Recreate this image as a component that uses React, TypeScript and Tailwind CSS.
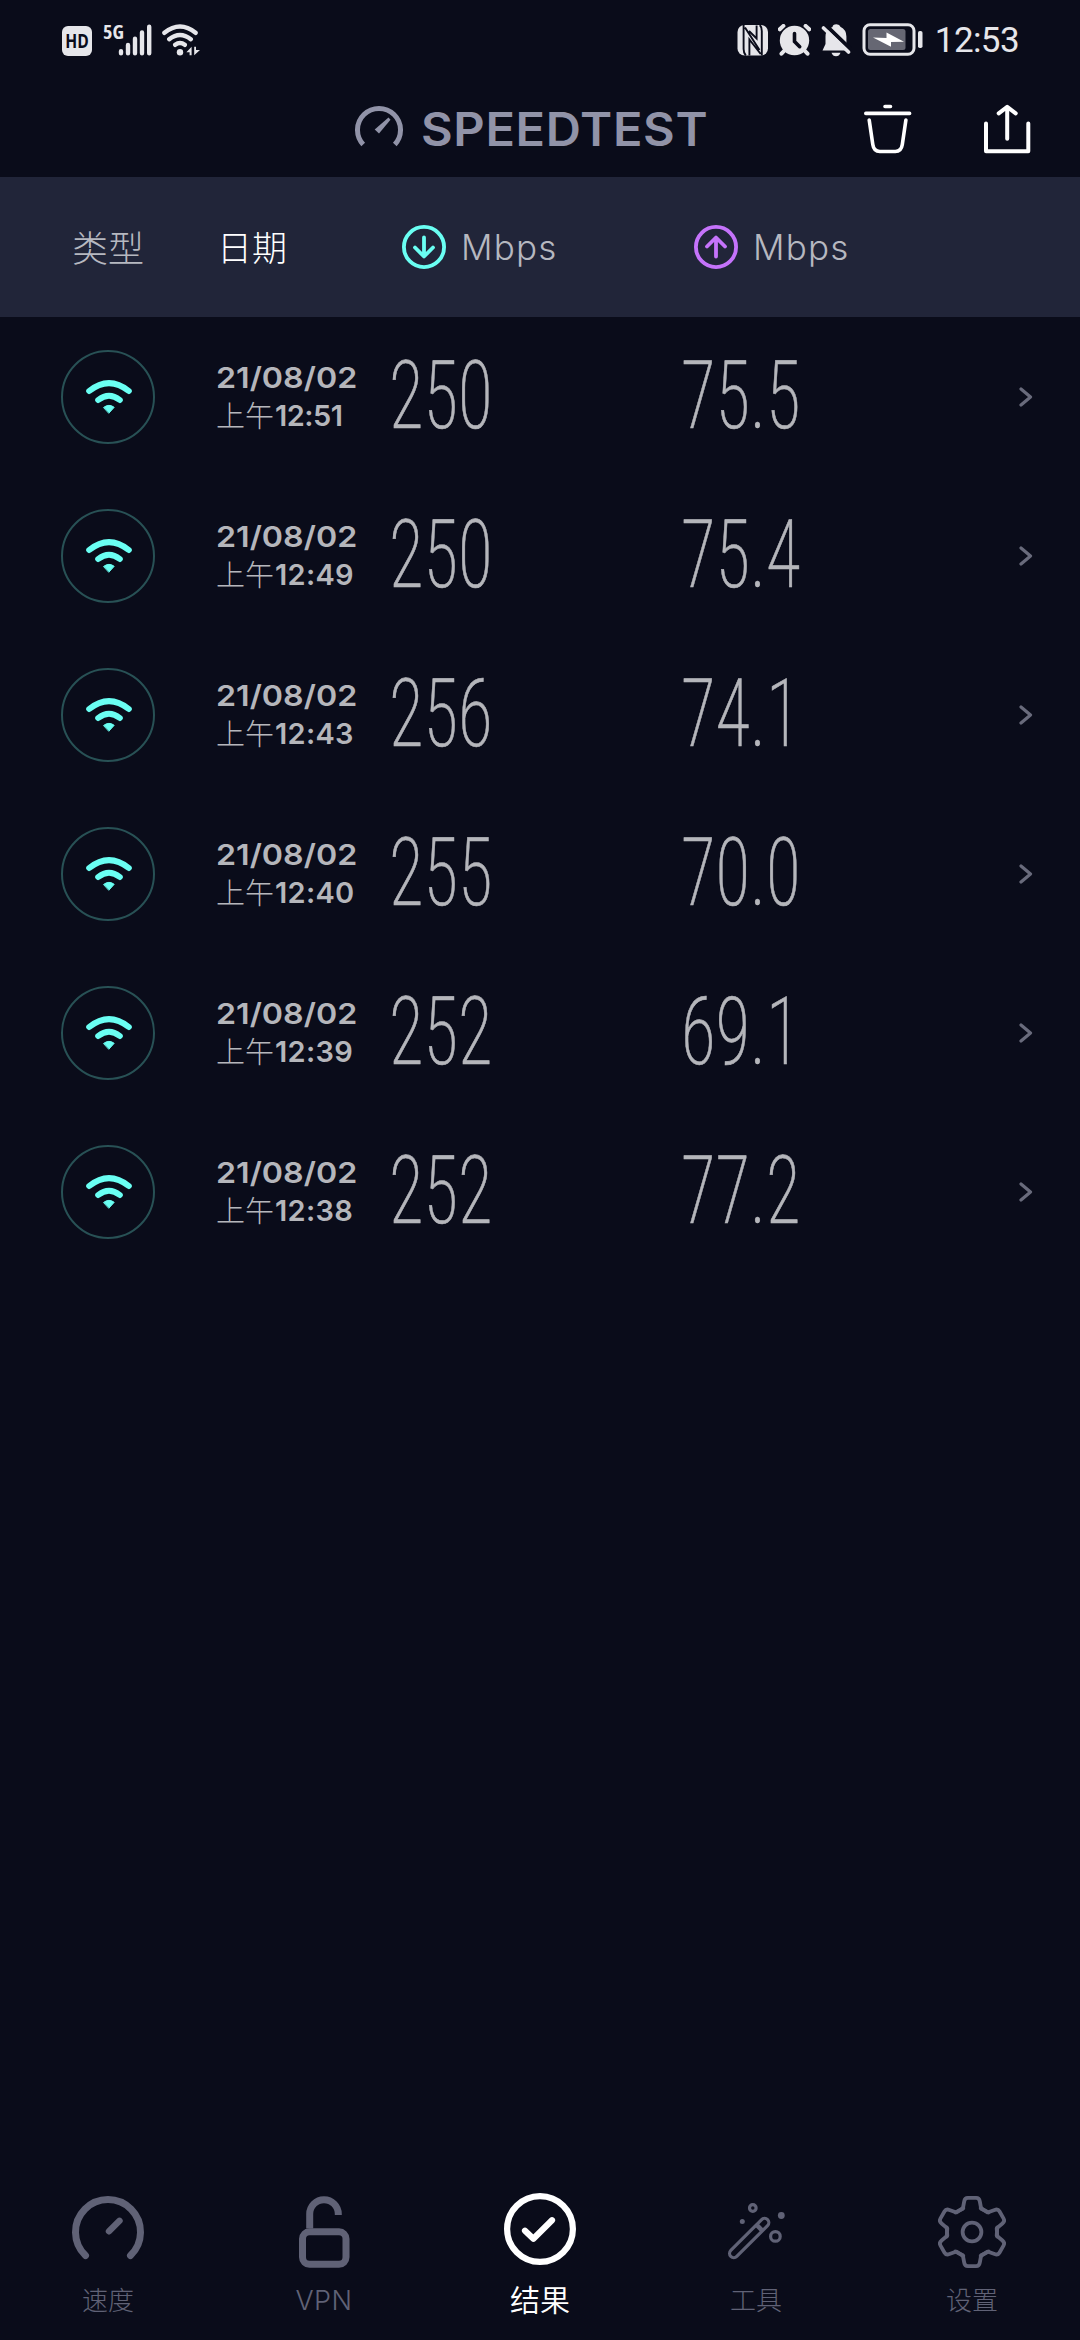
const results = [
   { date: '21/08/02', time: '12:51', down: '250', up: '75.5' },
   { date: '21/08/02', time: '12:49', down: '250', up: '75.4' },
   { date: '21/08/02', time: '12:43', down: '256', up: '74.1' },
   { date: '21/08/02', time: '12:40', down: '255', up: '70.0' },
   { date: '21/08/02', time: '12:39', down: '252', up: '69.1' },
   { date: '21/08/02', time: '12:38', down: '252', up: '77.2' },
];

function SignalIcons() {
   return (
      <div className="flex h-8 items-start text-[#e6e6ea]">
         <div className="mt-[2px] flex h-[30px] w-[30px] items-center justify-center rounded-[6px] bg-[#e6e6ea] font-['Open_Sans',sans-serif] text-[20px] font-bold text-[#0a0c1a]">
            <span className="scale-x-[0.78]">HD</span>
         </div>
         <span className="ml-[11px] w-4 font-['Open_Sans',sans-serif] text-[20px] leading-[15px] font-bold font-stretch-75%">
            5G
         </span>
         <svg width="31" height="32" viewBox="120 24 31 32" className="overflow-visible" stroke="currentColor" strokeWidth="4.4" strokeLinecap="round">
            <path d="M122 51.2v2M129 45v8.2M136 38.7v14.5M143 32.4v20.8M150.2 26.7v26.5" />
         </svg>
         <svg width="39" height="32" viewBox="162 24 39 32" className="ml-3" fill="none" stroke="currentColor" strokeWidth="4.4" strokeLinecap="round">
            <path d="M164.4 32.8Q180 20.4 195.6 32.8M169.2 39.2Q180 30.6 190.8 39.2M175.2 44.8Q180 41 184.8 44.8" />
            <circle cx="180" cy="52.3" r="3.2" fill="currentColor" stroke="none" />
            <path d="M191.6 46.8v8.4h-2v-3h-3.2zM194.2 55.2v-8.4h1.8v3.2h4z" fill="currentColor" stroke="none" />
         </svg>
      </div>
   );
}

function StatusIcons() {
   return (
      <div className="flex items-center gap-[10px] text-[#e6e6ea]">
         <svg width="31" height="32" viewBox="735 24 31 32">
            <rect x="735.5" y="25" width="30.5" height="30.5" rx="7" fill="currentColor" />
            <path
               d="M741.6 25v24q0 4 2.2 6.5M743 27.5l14.5 22.5M747.4 55.5V39.5l11.3 14.5M759.8 55.5V31q0-4-2-6M754.6 25.5V38.5L747 31"
               fill="none"
               stroke="#0a0c1a"
               strokeWidth="1.9"
            />
         </svg>
         <svg width="33" height="32" viewBox="776.5 24.5 33 32" fill="none" strokeLinecap="round">
            <circle cx="793" cy="41" r="14.7" fill="currentColor" />
            <path d="M783 51l-3 3.2M803 51l3 3.2M778.3 29.8l3.6-3.4M807.7 29.8l-3.6-3.4" stroke="currentColor" strokeWidth="4" />
            <path d="M793 34v8l5.2 5.2" stroke="#0a0c1a" strokeWidth="3.6" />
         </svg>
         <svg width="31" height="33" viewBox="820 24 31 33" strokeLinecap="round">
            <path d="M831.5 27q0-2.5 4-2.8 3.3.3 3.9 2.6 6 3 6 9.7v7.5l3.6 6.5h-27.5l3-6.5v-7.5q0-6 5-8.5z" fill="currentColor" />
            <path d="M830.5 52.7h9q-1.3 3.5-4.5 3.5t-4.5-3.5z" fill="currentColor" />
            <path d="M824.5 25L852 51.5" stroke="#0a0c1a" strokeWidth="4" />
            <path d="M822.5 28L847.5 52" stroke="currentColor" strokeWidth="3.6" />
         </svg>
         <svg width="61" height="34" viewBox="861 24 61 34">
            <rect x="863" y="25.7" width="50" height="29.5" rx="6" fill="none" stroke="currentColor" strokeWidth="3" />
            <rect x="867" y="30" width="37.5" height="21" rx="2.5" fill="#666773" />
            <path d="M872 38.5l13.5.5v-5.5L903 42.7l-13 .3v4.8z" fill="#fff" />
            <rect x="917" y="32" width="4.5" height="17" rx="1.8" fill="currentColor" />
         </svg>
         <span className="ml-[2px] font-[Roboto,sans-serif] text-[35px] leading-none tracking-[-0.6px]">12:53</span>
      </div>
   );
}

function TitleBar() {
   return (
      <div className="flex h-[97px] items-center pl-[355px] text-[#9193a8]">
         <svg width="48" height="48" viewBox="355 105 48 48" fill="none" stroke="currentColor" strokeWidth="5">
            <path d="M363.2 144.5A21.5 21.5 0 1 1 394.8 144.5" />
            <path d="M388.5 117.5l2 2.2L379 133.5l-4.3-4z" fill="currentColor" stroke="none" />
         </svg>
         <span className="ml-[18px] w-[443px]">
            <span className="inline-block origin-left scale-x-106 font-[Inter,sans-serif] text-[46px] leading-none font-semibold tracking-[0.6px]">
               SPEEDTEST
            </span>
         </span>
         <svg width="48" height="50" viewBox="864 104 48 50" fill="none" stroke="#fff" strokeWidth="3.6" strokeLinecap="round">
            <path d="M885 106.5h5.5M865.8 113.4h43.8M869.2 120l3.6 24.5q1 7 7 7h15.5q6 0 7-7l3.6-24.5" />
         </svg>
         <svg width="48" height="50" viewBox="983 104 48 50" className="ml-[71px]" fill="none" stroke="#fff" strokeWidth="4" strokeLinecap="round" strokeLinejoin="round">
            <path d="M986 123.5v27.8h42.3v-27.8M1007.2 138.7V107M998.7 113.3l8.5-6.5 8.5 6.5" />
         </svg>
      </div>
   );
}

function SpeedUnit({ up = false }: { up?: boolean }) {
   return (
      <div className="flex w-[292px] items-center gap-[15px]">
         <svg
            width="44"
            height="44"
            viewBox="0 0 44 44"
            className={up ? 'rotate-180 text-[#c573fb]' : 'text-[#6afff3]'}
            fill="none"
            stroke="currentColor"
            strokeWidth="3.8"
            strokeLinecap="round"
            strokeLinejoin="round"
         >
            <circle cx="22" cy="22" r="20.1" />
            <path d="M22 12.5V31M13 22.5l9 9 9-9" />
         </svg>
         <span className="font-[Inter,sans-serif] text-[35px] leading-none font-[350] tracking-[1.2px]">Mbps</span>
      </div>
   );
}

function TableHeader() {
   return (
      <div className="flex h-[140px] items-center bg-[#212539] pl-[72px] text-[#b6b8c0]">
         <span className="w-[145px] pb-[3px] font-['Noto_Sans_CJK_SC',sans-serif] text-[36px] leading-none font-light">类型</span>
         <span className="w-[185px] pb-[3px] font-['Noto_Sans_CJK_SC',sans-serif] text-[35px] leading-none font-light text-white">日期</span>
         <SpeedUnit />
         <SpeedUnit up />
      </div>
   );
}

function Speed({ value, className }: { value: string; className: string }) {
   return (
      <div className={className}>
         <span className="inline-block origin-left scale-x-[0.75] pb-[2px] font-[Roboto,sans-serif] text-[95px] leading-none font-extralight font-stretch-75% [-webkit-text-stroke:0.6px_currentColor]">
            {value}
         </span>
      </div>
   );
}

function ResultRow({ date, time, down, up }: (typeof results)[number]) {
   return (
      <div className="flex h-[159px] items-center pl-[61px] text-[#b5b6bb]">
         <div className="flex h-[94px] w-[94px] items-center justify-center rounded-full border-2 border-[#285155]">
            <svg width="46" height="36" viewBox="0 0 46 36" className="ml-px" fill="none" stroke="#6afff3" strokeWidth="6" strokeLinecap="round">
               <path d="M3.2 12Q23-3.8 42.8 12M12.2 21Q23 12.5 33.8 21" />
               <path d="M17.8 28.3Q23 24.3 28.2 28.3L23 34z" fill="#6afff3" stroke="#6afff3" strokeWidth="1" strokeLinejoin="round" />
            </svg>
         </div>
         <div className="ml-[61px] w-[173px] font-[Inter,sans-serif] text-[29px] leading-[38px] font-semibold">
            <div className="origin-left scale-x-111">{date}</div>
            <div className="flex whitespace-nowrap">
               <span className="h-[38px] w-[59px] font-['Noto_Sans_CJK_SC',sans-serif] leading-[34px] font-extralight">上午</span>
               <span className={time.endsWith('1') ? 'tracking-[-0.5px]' : 'tracking-[0.3px]'}>{time}</span>
            </div>
         </div>
         <Speed value={down} className="w-[292px]" />
         <Speed value={up} className="w-[338px]" />
         <svg width="14" height="20" viewBox="0 0 14 20" fill="none" stroke="#696b7c" strokeWidth="3.2" strokeLinecap="round" strokeLinejoin="round">
            <path d="M2 2l9.5 8L2 18" />
         </svg>
      </div>
   );
}

function GaugeIcon() {
   return (
      <svg width="76" height="76" viewBox="70 2194 76 76" fill="none" stroke="currentColor" strokeWidth="7" strokeLinecap="round">
         <path d="M85.5 2255.5A32.5 32.5 0 1 1 130.5 2255.5" />
         <path d="M109 2231.3l10.5-10.5" strokeWidth="6.4" />
      </svg>
   );
}

function LockIcon() {
   return (
      <svg width="76" height="76" viewBox="286 2194 76 76" fill="none" stroke="currentColor" strokeWidth="7">
         <rect x="302.5" y="2231.8" width="43.5" height="32.5" rx="7" />
         <path d="M309.7 2228.5v-14.5a14.3 14.3 0 0 1 28.6 0v1" />
      </svg>
   );
}

function CheckIcon() {
   return (
      <svg width="76" height="76" viewBox="502 2191 76 76" fill="none" stroke="currentColor" strokeWidth="6.2" strokeLinecap="round" strokeLinejoin="round">
         <circle cx="540" cy="2229" r="32.9" />
         <path d="M525 2230.7l8.4 8.1 18.6-18.6" />
      </svg>
   );
}

function WandIcon() {
   return (
      <svg width="76" height="76" viewBox="718 2194 76 76" fill="none" stroke="currentColor" strokeWidth="3.2">
         <g transform="translate(749.2 2238) rotate(-45)">
            <rect x="-26" y="-4.2" width="52" height="8.4" rx="4.2" />
            <path d="M14.5-4v8" strokeWidth="4.5" />
         </g>
         <circle cx="752.8" cy="2208" r="3.3" />
         <circle cx="775.4" cy="2236.4" r="4.8" />
         <circle cx="742.3" cy="2221.4" r="2.5" fill="currentColor" stroke="none" />
         <circle cx="781.3" cy="2215.5" r="3.4" fill="currentColor" stroke="none" />
      </svg>
   );
}

// One tooth of the gear, drawn six times round the hub
function GearIcon() {
   return (
      <svg width="76" height="76" viewBox="-38 -38 76 76" fill="none" stroke="currentColor" strokeWidth="3.8" strokeLinecap="round" strokeLinejoin="round">
         {[0, 60, 120, 180, 240, 300].map((angle) => (
            <path
               key={angle}
               transform={`rotate(${angle})`}
               d="M-16.6-19.6L-9.2-23.2L-7.8-30.6Q-7.2-34.1-4.2-34.1H4.2Q7.2-34.1 7.8-30.6L9.2-23.2L16.6-19.6"
            />
         ))}
         <circle r="9.4" />
      </svg>
   );
}

const tabs = [
   { label: '速度', icon: <GaugeIcon /> },
   { label: 'VPN', icon: <LockIcon />, latin: true },
   { label: '结果', icon: <CheckIcon />, active: true },
   { label: '工具', icon: <WandIcon /> },
   { label: '设置', icon: <GearIcon /> },
];

function TabBar() {
   return (
      <div className="mt-auto grid h-[149px] grid-cols-5">
         {tabs.map(({ label, icon, active, latin }) => (
            <div key={label} className={`flex flex-col items-center ${active ? 'text-white' : 'pt-[3px] text-[#606276]'}`}>
               {icon}
               <span
                  className={
                     latin
                        ? 'mt-[18px] font-[Inter,sans-serif] text-[27px] leading-[26px] font-light tracking-[0.5px]'
                        : active
                          ? "mt-[16px] font-['Noto_Sans_CJK_SC',sans-serif] text-[30px] leading-[30px] font-[350]"
                          : "mt-[16px] font-['Noto_Sans_CJK_SC',sans-serif] text-[26px] leading-[26px] font-light"
                  }
               >
                  {label}
               </span>
            </div>
         ))}
      </div>
   );
}

export default function App() {
   return (
      <div className="flex h-[2340px] w-[1080px] flex-col overflow-hidden bg-[#0a0c1a]">
         <div className="flex h-20 items-center justify-between pr-[61px] pl-[62px]">
            <SignalIcons />
            <StatusIcons />
         </div>
         <TitleBar />
         <TableHeader />
         {results.map((result) => (
            <ResultRow key={result.time} {...result} />
         ))}
         <TabBar />
      </div>
   );
}
